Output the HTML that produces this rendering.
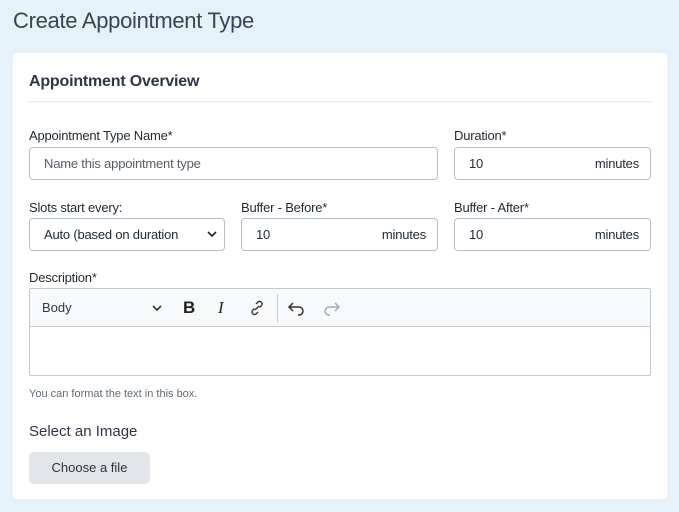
<!DOCTYPE html>
<html><head><style>
*{box-sizing:border-box;margin:0;padding:0}
body{width:679px;height:512px;background:#e5f2fa;font-family:"Liberation Sans",sans-serif;color:#2d3748;position:relative;overflow:hidden}
.abs{position:absolute}
h1{position:absolute;left:13px;top:8px;font-size:22px;font-weight:400;color:#3a4450;letter-spacing:-0.3px}
.card{position:absolute;left:13px;top:53px;width:654px;height:446px;background:#fff;border-radius:4px}
.h2{left:29px;top:73px;font-size:16px;font-weight:700;color:#2d3748;letter-spacing:-0.2px}
.hr{left:29px;top:101px;width:622px;height:1px;background:#e2e8f0}
.lbl{font-size:13px;color:#1f2933;letter-spacing:-0.2px}
.in{border:1px solid #b8bec6;border-radius:4px;height:33px;font-size:13px;padding:0 14px;line-height:31px;color:#1f2933;letter-spacing:-0.2px}
.in span{float:right;margin-right:-3px}
</style></head><body>
<h1>Create Appointment Type</h1>
<div class="card"></div>
<div class="abs h2">Appointment Overview</div>
<div class="abs hr"></div>
<div class="abs lbl" style="left:29px;top:128px">Appointment Type Name*</div>
<div class="abs in" style="left:29px;top:147px;width:409px;color:#555d66">Name this appointment type</div>
<div class="abs lbl" style="left:454px;top:128px">Duration*</div>
<div class="abs in" style="left:454px;top:147px;width:197px">10<span>minutes</span></div>
<div class="abs lbl" style="left:29px;top:200px">Slots start every:</div>
<div class="abs in" style="left:29px;top:218px;width:196px">Auto (based on duration</div>
<svg class="abs" style="left:206px;top:229px" width="12" height="10"><path d="M2 3l4 4 4-4" stroke="#222" stroke-width="1.6" fill="none"/></svg>
<div class="abs lbl" style="left:241px;top:200px">Buffer - Before*</div>
<div class="abs in" style="left:241px;top:218px;width:197px">10<span>minutes</span></div>
<div class="abs lbl" style="left:454px;top:200px">Buffer - After*</div>
<div class="abs in" style="left:454px;top:218px;width:197px">10<span>minutes</span></div>
<div class="abs lbl" style="left:29px;top:270px">Description*</div>
<div class="abs" style="left:29px;top:288px;width:622px;height:88px;border:1px solid #c4c9cf;border-radius:2px"></div>
<div class="abs" style="left:30px;top:289px;width:620px;height:38px;background:#f8f9fa;border-bottom:1px solid #c4c9cf"></div>
<div class="abs" style="left:42px;top:300px;font-size:13px">Body</div>
<svg class="abs" style="left:150px;top:302px" width="14" height="12"><path d="M3 4l4 4 4-4" stroke="#333" stroke-width="1.6" fill="none"/></svg>
<div class="abs" style="left:183px;top:298px;font-size:17px;font-weight:700;color:#222">B</div>
<div class="abs" style="left:218px;top:298px;font-size:17px;font-style:italic;font-family:'Liberation Serif',serif;color:#222">I</div>
<svg class="abs" style="left:248px;top:298px" width="18" height="20"><path d="M7 12l4-4M8 6l2-2a2.5 2.5 0 013.5 3.5l-2 2M10 14l-2 2a2.5 2.5 0 01-3.5-3.5l2-2" stroke="#333" stroke-width="1.4" fill="none"/></svg>
<div class="abs" style="left:277px;top:294px;width:1px;height:28px;background:#c4c9cf"></div>
<svg class="abs" style="left:287px;top:299px" width="20" height="18"><path d="M6 4L2 8l4 4M2 8h10a4 4 0 010 8h-1" stroke="#333" stroke-width="1.5" fill="none"/></svg>
<svg class="abs" style="left:321px;top:299px" width="20" height="18"><path d="M14 4l4 4-4 4M18 8H8a4 4 0 000 8h1" stroke="#aab" stroke-width="1.5" fill="none"/></svg>
<div class="abs" style="left:29px;top:388px;font-size:11px;color:#5f6b76">You can format the text in this box.</div>
<div class="abs" style="left:29px;top:423px;font-size:15px;color:#2d3748">Select an Image</div>
<div class="abs" style="left:29px;top:452px;width:121px;height:32px;background:#e2e6ea;border-radius:5px;font-size:13px;line-height:32px;text-align:center;color:#333">Choose a file</div>
</body></html>
